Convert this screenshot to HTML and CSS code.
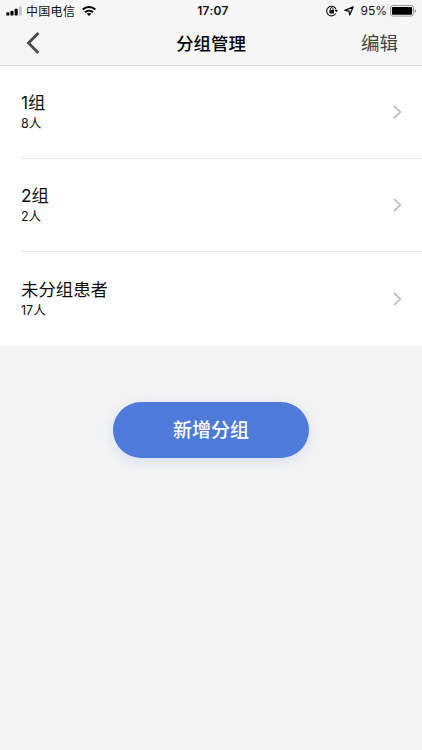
FILE: index.html
```
<!DOCTYPE html>
<html lang="zh-Hans">
<head>
  <meta charset="UTF-8">
  <meta name="viewport" content="width=device-width, initial-scale=1">
  <title>分组管理</title>
  <link rel="stylesheet" href="styles.css">
</head>
<body>
  <header class="header">
    <div class="status">
      <div class="status-left">
        <svg class="signal" width="16" height="10" viewBox="0 0 16 10">
          <rect x=".3" y="6.2" width="3.1" height="3.4" rx=".9"/>
          <rect x="4.4" y="4.8" width="3.1" height="4.8" rx=".9"/>
          <rect x="8.6" y="2.8" width="3.1" height="6.8" rx=".9"/>
          <rect x="12.8" y=".4" width="3.1" height="9.2" rx=".9" fill="#c4c4c4"/>
        </svg>
        <span class="carrier">中国电信</span>
        <svg class="wifi" width="14" height="10" viewBox="0 0 14 10" fill="none" stroke="#000" stroke-width="2">
          <path d="M.7 3.6C4.3.2 9.7.2 13.3 3.6"/>
          <path d="M3.1 6.2C5.3 4.1 8.7 4.1 10.9 6.2"/>
          <path d="M7 9.9L4.8 7.8Q7 6 9.2 7.8Z" fill="#000" stroke="none"/>
        </svg>
      </div>
      <div class="time">17:07</div>
      <div class="status-right">
        <svg class="lock" width="12" height="12" viewBox="0 0 12 12" fill="none" stroke="#111">
          <path d="M9.7 8.4A4.8 4.8 0 1 1 10.1 4.7" stroke-width="1.1"/>
          <path d="M8.5 4.9H12L10.3 7.3Z" fill="#111" stroke="none"/>
          <rect x="3.4" y="5" width="4.6" height="3.5" fill="#111" stroke="none"/>
          <path d="M4.3 5.2V4a1.4 1.4 0 0 1 2.8 0V5.2" stroke-width=".9"/>
        </svg>
        <svg class="location" width="10" height="10" viewBox="0 0 10 10" fill="none" stroke="#111" stroke-width="1.3" stroke-linejoin="round">
          <path d="M9.2.8L5.7 9 5 5 .9 4.4Z"/>
        </svg>
        <span class="percent">95%</span>
        <svg class="battery" width="27" height="12" viewBox="0 0 27 12">
          <rect x=".5" y=".5" width="23" height="10.6" rx="2.4" fill="none" stroke="#999"/>
          <rect x="1.9" y="1.9" width="20.2" height="7.8" rx="1"/>
          <path d="M24.6 4v3.8q1.5-.5 1.5-1.9T24.6 4z" fill="#999"/>
        </svg>
      </div>
    </div>
    <div class="navbar">
      <a class="back">
        <svg width="14" height="22" viewBox="0 0 14 22" fill="none" stroke="#4a4a4a" stroke-width="2.8">
          <path d="M12.4 1L2.5 11 12.4 21"/>
        </svg>
      </a>
      <h1 class="title">分组管理</h1>
      <a class="edit">编辑</a>
    </div>
  </header>

  <ul class="list">
    <li class="item">
      <div>
        <div class="name">1组</div>
        <div class="count">8人</div>
      </div>
      <svg class="arrow" width="9" height="14" viewBox="0 0 9 14"><path d="M1 1L7.3 7 1 13"/></svg>
    </li>
    <li class="item">
      <div>
        <div class="name">2组</div>
        <div class="count">2人</div>
      </div>
      <svg class="arrow" width="9" height="14" viewBox="0 0 9 14"><path d="M1 1L7.3 7 1 13"/></svg>
    </li>
    <li class="item">
      <div>
        <div class="name">未分组患者</div>
        <div class="count">17人</div>
      </div>
      <svg class="arrow" width="9" height="14" viewBox="0 0 9 14"><path d="M1 1L7.3 7 1 13"/></svg>
    </li>
  </ul>

  <button class="add-btn">新增分组</button>
</body>
</html>
```

FILE: styles.css
```
* {
  box-sizing: border-box;
}

body {
  margin: 0;
  min-height: 100vh;
  background: #f3f3f3;
  color: #111;
  font-family: Inter, "Noto Sans CJK SC", sans-serif;
}

.header {
  height: 66px;
  background: #f6f6f6;
  border-bottom: 1px solid #d9d9d9;
}

/* 状态栏 */
.status {
  display: grid;
  grid-template-columns: 1fr auto 1fr;
  align-items: center;
  height: 22px;
  padding: 0 5px 0 6px;
  font-size: 12px;
  line-height: 22px;
}

.status-left,
.status-right {
  display: flex;
  align-items: center;
  height: 22px;
}

.status-right {
  justify-content: flex-end;
}

.carrier {
  margin-left: 4px;
  padding-top: 2px;
  letter-spacing: 0.3px;
}

.wifi {
  margin-left: 7px;
}

.time {
  margin-left: 3px;
  font-weight: 600;
  letter-spacing: 0.3px;
}

.location {
  margin-left: 6px;
}

.percent {
  margin-left: 6px;
}

.battery {
  margin-left: 3px;
}

/* 导航栏 */
.navbar {
  display: grid;
  grid-template-columns: 1fr auto 1fr;
  align-items: center;
  height: 42px;
  padding: 0 24px 0 26px;
}

.back {
  display: flex;
}

.title {
  margin: 0 1px 0 -1px;
  padding-top: 1px;
  color: #000;
  font-size: 17.4px;
  font-weight: 500;
  line-height: 26px;
}

.edit {
  color: #444;
  font-size: 18.5px;
  line-height: 26px;
  text-align: right;
}

/* 分组列表 */
.list {
  margin: 0;
  padding: 0 0 0 21px;
  background: #fff;
  list-style: none;
}

.item {
  display: flex;
  align-items: center;
  justify-content: space-between;
  height: 93.2px;
  padding-right: 20px;
  border-bottom: 1px solid #e4e4e4;
}

.item:last-child {
  border-bottom: none;
}

.name {
  font-size: 17.4px;
  line-height: 24px;
}

.count {
  font-size: 12.5px;
  line-height: 18px;
}

.arrow {
  fill: none;
  stroke: #c3c3c7;
  stroke-width: 1.9;
}

.add-btn {
  display: block;
  width: 196px;
  height: 56px;
  margin: 56px auto 0;
  padding: 0 0 2px;
  border: none;
  border-radius: 28px;
  background: #4e7bda;
  box-shadow: 0 3px 12px rgba(78, 123, 218, 0.18);
  color: #fff;
  font-family: inherit;
  font-size: 19px;
  font-weight: 500;
}
```
